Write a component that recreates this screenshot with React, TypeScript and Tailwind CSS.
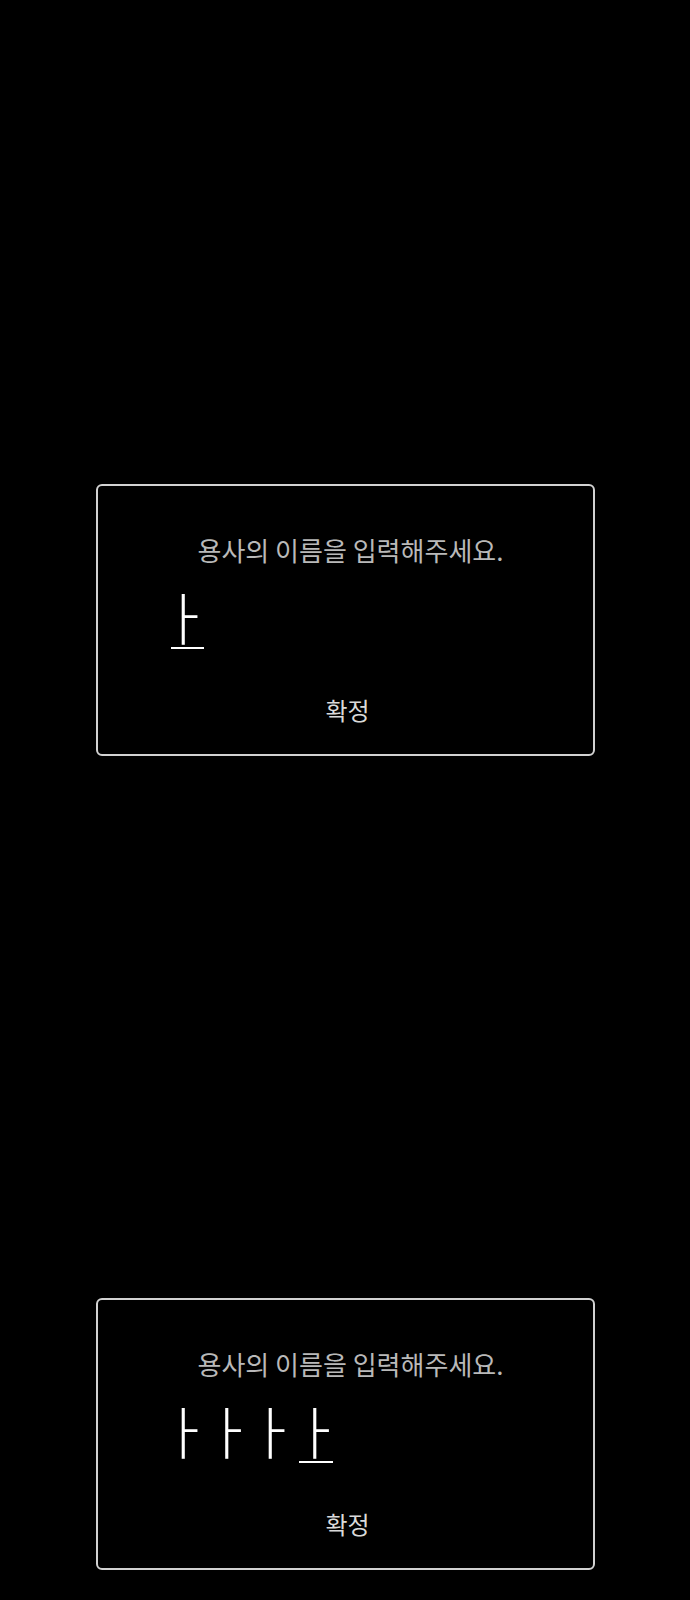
const FONT = "font-['Noto_Sans_CJK_KR','Noto_Sans',sans-serif]";

interface NameDialogProps {
  chars: string[];
}

function NameDialog({ chars }: NameDialogProps) {
  return (
    <div className="mx-auto w-[499px] h-[272px] rounded-[6px] border-2 border-[#d2d2d2] bg-black flex flex-col">
      {/* Prompt */}
      <p className="mt-[46px] text-center text-[26px] leading-[36px] text-[#b9b9b9] pl-[11px]">
        용사의 이름을 입력해주세요.
      </p>

      {/* Name input, last char is still composing */}
      <div className="mt-[19px] pl-[73px] flex h-[62px]">
        {chars.map((c, i) =>
          i === chars.length - 1 ? (
            <div
              key={i}
              className={
                i === 0
                  ? 'w-[33px] h-[62px] pb-[3px] flex items-end border-b-2 border-white'
                  : '-ml-[2px] w-[34px] h-[62px] pb-[3px] flex items-end border-b-2 border-white'
              }
            >
              <span
                className={
                  i === 0
                    ? 'inline-block -ml-[12px] text-[57px] font-light leading-none tracking-[-24px] text-white'
                    : 'inline-block -ml-[9px] text-[57px] font-light leading-none tracking-[-24px] text-white'
                }
              >
                {c}
              </span>
            </div>
          ) : (
            <div key={i} className="w-[43.5px] h-[62px] pb-[3px] flex items-end border-b-2 border-transparent">
              <span className="inline-block -ml-[12px] text-[57px] font-light leading-none tracking-[-24px] text-white">
                {c}
              </span>
            </div>
          )
        )}
      </div>

      {/* Confirm */}
      <button className="mt-[44px] self-center text-[24px] leading-[34px] text-[#dadada] pl-[5px]">
        확정
      </button>
    </div>
  );
}

export default function App() {
  return (
    <div className={`${FONT} bg-black w-full h-[1600px] pt-[484px] flex flex-col gap-[542px]`}>
      <NameDialog chars={['ㅏ']} />
      <NameDialog chars={['ㅏ', 'ㅏ', 'ㅏ', 'ㅏ']} />
    </div>
  );
}
